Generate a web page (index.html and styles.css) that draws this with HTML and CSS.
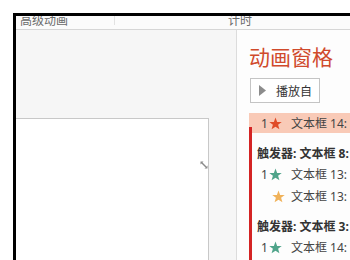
FILE: index.html
```html
<!DOCTYPE html>
<html lang="zh">
<head>
<meta charset="utf-8">
<link rel="stylesheet" href="styles.css">
</head>
<body>
<div class="frame">
  <div class="ribbon">
    <div class="rib-group first"><span class="rib-label">高级动画</span></div>
    <div class="rib-sep"></div>
    <div class="rib-group second"><span class="rib-label">计时</span></div>
  </div>
  <div class="main">
    <div class="canvas">
      <div class="slide">
        <svg class="cursor" width="8" height="8" viewBox="0 0 8 8">
          <path d="M0.5 0.5 L3.5 0.5 L2.5 1.5 L6.5 5.5 L5.5 6.5 L1.5 2.5 L0.5 3.5 Z" fill="#8a8a8a"/>
          <path d="M7.5 7.5 L4.5 7.5 L7.5 4.5 Z" fill="#8a8a8a"/>
        </svg>
      </div>
    </div>
    <div class="pane">
      <div class="pane-title">动画窗格</div>
      <div class="play-btn">
        <svg class="play-icon" width="7" height="11" viewBox="0 0 7 11"><path d="M0 0 L7 5.5 L0 11 Z" fill="#8c8c8c"/></svg>
        <span class="play-text">播放自</span>
      </div>
      <div class="list">
        <div class="row selected">
          <span class="num">1</span>
          <svg class="star" width="13" height="13" viewBox="0 0 24 24"><path d="M12 1 L15 9 L23.5 9.2 L16.8 14.4 L19.2 22.8 L12 17.8 L4.8 22.8 L7.2 14.4 L0.5 9.2 L9 9 Z" fill="#e04b27"/></svg>
          <span class="txt">文本框 14: </span>
        </div>
        <div class="group">
          <div class="trigger">触发器: 文本框 8: </div>
          <div class="row">
            <span class="num">1</span>
            <svg class="star" width="13" height="13" viewBox="0 0 24 24"><path d="M12 1 L15 9 L23.5 9.2 L16.8 14.4 L19.2 22.8 L12 17.8 L4.8 22.8 L7.2 14.4 L0.5 9.2 L9 9 Z" fill="#4fa48a"/></svg>
            <span class="txt">文本框 13: </span>
          </div>
          <div class="row">
            <span class="num"></span>
            <svg class="star shift" width="13" height="13" viewBox="0 0 24 24"><path d="M12 1 L15 9 L23.5 9.2 L16.8 14.4 L19.2 22.8 L12 17.8 L4.8 22.8 L7.2 14.4 L0.5 9.2 L9 9 Z" fill="#f0b25a"/></svg>
            <span class="txt">文本框 13: </span>
          </div>
        </div>
        <div class="group">
          <div class="trigger">触发器: 文本框 3: </div>
          <div class="row">
            <span class="num">1</span>
            <svg class="star" width="13" height="13" viewBox="0 0 24 24"><path d="M12 1 L15 9 L23.5 9.2 L16.8 14.4 L19.2 22.8 L12 17.8 L4.8 22.8 L7.2 14.4 L0.5 9.2 L9 9 Z" fill="#4fa48a"/></svg>
            <span class="txt">文本框 14: </span>
          </div>
        </div>
      </div>
    </div>
  </div>
</div>
</body>
</html>
```

FILE: styles.css
```css
html, body {
  margin: 0;
  padding: 0;
}
body {
  width: 350px;
  height: 260px;
  overflow: hidden;
  background: #ffffff;
  font-family: "Noto Sans", "Noto Sans CJK SC", sans-serif;
}
.frame {
  margin: 13px 0 0 13px;
  border-top: 3px solid #000;
  border-left: 3px solid #000;
  height: 244px;
  display: flex;
  flex-direction: column;
  overflow: hidden;
}
.ribbon {
  height: 13px;
  flex: none;
  display: flex;
  border-bottom: 1px solid #d6d6d6;
  background: #fbfbfb;
  overflow: hidden;
}
.rib-group {
  display: flex;
  align-items: flex-start;
}
.rib-group.first {
  width: 94px;
  padding-left: 4px;
}
.rib-group.second {
  padding-left: 113px;
}
.rib-label {
  font-size: 12px;
  line-height: 9px;
  color: #6a6a6a;
  white-space: nowrap;
}
.rib-sep {
  width: 1px;
  height: 9px;
  background: #e2e2e2;
}
.main {
  flex: 1;
  display: flex;
  min-height: 0;
}
.canvas {
  width: 220px;
  flex: none;
  background: #f6f6f6;
  padding-top: 88px;
  box-sizing: border-box;
  display: flex;
  flex-direction: column;
}
.slide {
  position: relative;
  width: 192px;
  flex: 1;
  background: #ffffff;
  border-top: 1px solid #c8c8c8;
  border-right: 1px solid #c8c8c8;
}
.cursor {
  position: absolute;
  left: 184px;
  top: 42px;
}
.pane {
  flex: 1;
  border-left: 1px solid #dcdcdc;
  background: #fdfdfd;
  padding: 15px 0 0 12px;
  min-width: 0;
}
.pane-title {
  font-size: 21px;
  line-height: 24px;
  color: #d04a2c;
  white-space: nowrap;
}
.play-btn {
  margin: 9px 0 0 1px;
  width: 68px;
  height: 23px;
  border: 1px solid #c4c4c4;
  background: #ffffff;
  display: flex;
  align-items: center;
  box-sizing: content-box;
}
.play-icon {
  margin-left: 8px;
}
.play-text {
  margin-left: 10px;
  font-size: 12px;
  color: #333;
}
.list {
  position: relative;
  margin-top: 10px;
  width: 120px;
}
.list::before {
  content: "";
  position: absolute;
  left: 0;
  top: 14px;
  width: 3px;
  height: 200px;
  background: #d42424;
  z-index: 2;
}
.row {
  height: 20px;
  display: flex;
  align-items: center;
  white-space: nowrap;
  font-size: 12px;
  color: #444;
}
.row.selected {
  background: #f9cab7;
}
.group {
  margin-top: 11px;
}
.group .row + .row {
  margin-top: 2px;
}
.num {
  width: 8px;
  margin-left: 12px;
  flex: none;
}
.star {
  flex: none;
}
.star.shift {
  margin-left: 3px;
  margin-right: -3px;
}
.txt {
  margin-left: 9px;
}
.trigger {
  height: 20px;
  line-height: 20px;
  padding-left: 8px;
  font-size: 12px;
  font-weight: bold;
  color: #333;
  white-space: nowrap;
}
```
